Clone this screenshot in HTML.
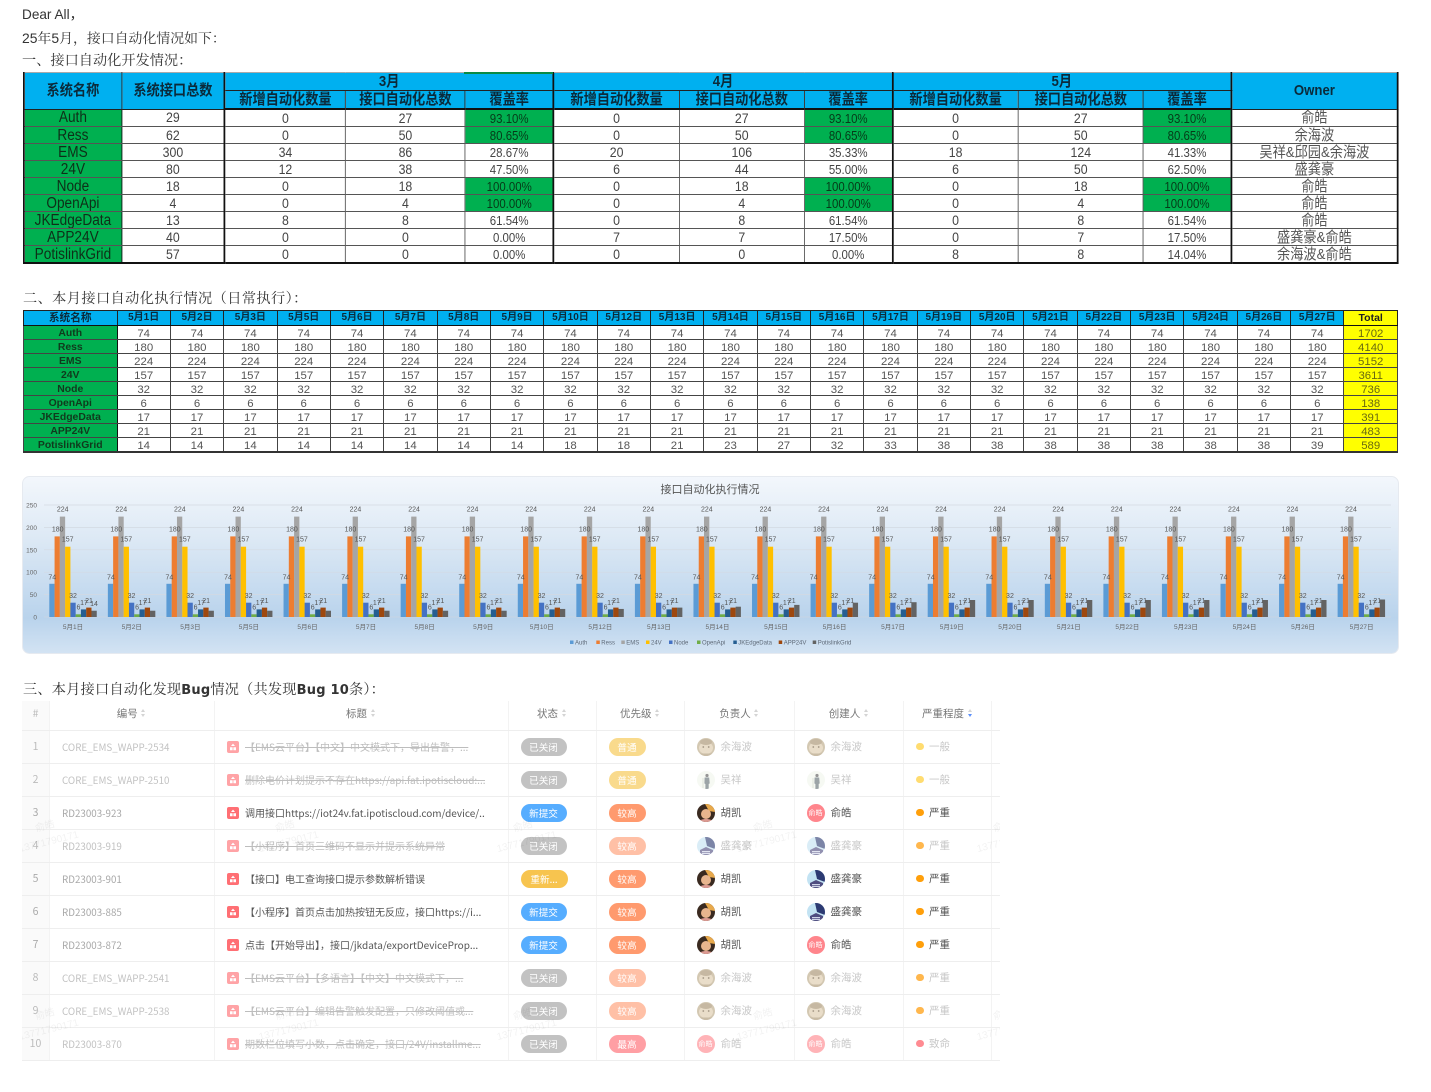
<!DOCTYPE html>
<html lang="zh"><head><meta charset="utf-8"><title>接口自动化</title>
<style>
html,body{margin:0;padding:0;background:#fff}
body{width:1431px;height:1092px;overflow:hidden;position:relative;font-family:"Liberation Sans","Noto Sans CJK SC",sans-serif;color:#333}
#w{position:absolute;left:0;top:0;width:1431px;height:1092px;filter:blur(.35px)}
.t{position:absolute;left:22px;font-family:"Liberation Serif","Noto Serif CJK SC",serif;font-size:14.2px;line-height:18px;white-space:nowrap;color:#333}
.t b{font-family:"DejaVu Sans",sans-serif;font-weight:700;font-size:13px}
.d{font-family:"Liberation Sans","Noto Sans CJK SC",sans-serif}
table{border-collapse:collapse;table-layout:fixed;position:absolute}
td,th{padding:0;text-align:center;overflow:hidden;white-space:nowrap}
#a{left:23px;top:72px;width:1562px;transform:scaleX(.8795);transform-origin:0 0;font-size:14px;color:#444}
#a td,#a th{height:16px;line-height:15px;border:1px solid #555}
#a thead th{height:17px;background:#00B0F0;color:#0b2a3a;font-size:15px;font-weight:700;border-color:#222;border-bottom-width:1px}
#a thead tr:last-child th{border-bottom:2px solid #111}
#a thead tr:first-child th{border-top:1px solid #aaa}
#a th.n{background:#00B050;color:#0e2f18;font-weight:400;font-size:15.5px;border-right:1px solid #111;border-top:1px solid #333}
#a .k{border-left:2px solid #111}
#a .g{background:#00B050;color:#063a18}
#a .p{font-size:13px}
#a .o{font-size:15px;color:#555;border-left:2px solid #111}
#a{border:2px solid #111;border-top:1px solid #aaa}
#b{left:23px;top:310px;width:1375px;font-size:11.4px;color:#555;border:1px solid #222;border-bottom:2px solid #333}
#b td,#b tbody th{height:10px;line-height:10px;padding-top:3px;border:1px solid #444}
#b thead th{height:14px;line-height:14px;background:#00B0F0;color:#0b2a3a;font-size:10px;font-weight:700;border:1px solid #222;border-bottom:1px solid #111}
#b thead th:first-child{font-size:10.7px}
#b tbody th{background:#00B050;color:#103a1d;font-size:10.4px;font-weight:700;border-right:1.5px solid #111}
#b .y{background:#FFFF00;color:#6a6a10;border-left:1.5px solid #111}
#b thead th.y{background:#FFFF00;color:#222;font-size:10.5px}
#c{position:absolute;left:0;top:0}
#e{left:22px;top:700.5px;width:978px;font-size:10.5px;line-height:14px;color:#555;font-family:"Noto Sans CJK SC",sans-serif}
#e th{height:27px;padding-bottom:2px;font-weight:400;color:#777;border-right:1px solid #f3f3f3;border-bottom:1px solid #eee}
#e td{height:32px;border-right:1px solid #f3f3f3;border-bottom:1px solid #eee;text-align:left}
#e td:last-child,#e th:last-child{border-right:0}
#e td:first-child,#e th:first-child{background:#fafafa;text-align:center;color:#aaa}
#e th:first-child{color:#bbb}
#e td.m{color:#a8a8a8;padding-left:12px;font-size:9.8px}
#e td.i{padding-left:12.5px;overflow:visible}
#e td.s{padding-left:12px}
#e td.u{padding-left:11.5px}
#e td.v{padding-left:12px}
#e tr.c td{color:#c8c8c8}
#e tr.c td:first-child{color:#bbb}
#e tr.c td.m{color:#c2c2c2}
.r{display:inline-block;width:6px;height:9px;position:relative;vertical-align:-1px;margin-left:3px}
.r:before,.r:after{content:"";position:absolute;left:.5px;border-left:2.5px solid transparent;border-right:2.5px solid transparent}
.r:before{top:0;border-bottom:3.5px solid #d4d4d4}
.r:after{top:5px;border-top:3.5px solid #d4d4d4}
.r.x:after{border-top-color:#5b8ff9}
.ic{display:inline-block;width:12px;height:12px;vertical-align:middle;margin-right:6px;color:#ff6f74}
tr.c .ic{color:#ffa3a6}
.tt{display:inline-block;width:240px;font-size:10px;vertical-align:middle;overflow:hidden;white-space:nowrap;color:#555}
tr.c .tt{color:#bdbdbd;text-decoration:line-through}
.pl{display:inline-block;height:18px;line-height:18px;border-radius:9px;text-align:center;color:#fff!important;font-size:9.6px;vertical-align:middle}
.st{width:46px}
.pr{width:37px}
.A{background:#c2c2c2}.B{background:#56adff}.C{background:#f7c44f;width:47px}
.D{background:#f9da8c}.E{background:#ff9a6e}.F{background:#ffc0a6}.G{background:#ff9fa4}
.av{display:inline-block;width:18px;height:18px;border-radius:50%;vertical-align:middle;margin-right:6px;overflow:hidden}
.av svg{display:block;width:18px;height:18px}
.nm{display:inline-block;vertical-align:middle}
tr.c .av{opacity:.62}
.yh{background:#ff858c;color:#fff!important;font-size:7px;line-height:18px;text-align:center;white-space:nowrap}
.dt{display:inline-block;width:7.5px;height:7.5px;border-radius:50%;margin-right:5.5px;vertical-align:middle}
#m{position:absolute;left:22px;top:700px;width:978px;height:361px;overflow:hidden;pointer-events:none}
.wm{position:absolute;color:rgba(0,0,0,.055);font-size:10px;transform:rotate(-14deg);white-space:nowrap;text-align:center;line-height:16px;width:80px}
.wm span{display:block}
</style></head><body><div id="w">
<div class="t d" style="top:6px;font-size:13.6px">Dear All，</div>
<div class="t" style="top:29px;font-size:13.9px"><span class="d">25</span>年<span class="d">5</span>月，接口自动化情况如下：</div>
<div class="t" style="top:52px">一、接口自动化开发情况：</div>

<table id="a"><colgroup><col style="width:111px"><col style="width:117.4px"><col style="width:137.5px"><col style="width:135.9px"><col style="width:100.5px"><col style="width:142.7px"><col style="width:142.5px"><col style="width:100px"><col style="width:143.2px"><col style="width:142px"><col style="width:100px"><col style="width:189.2px"></colgroup>
<thead><tr><th rowspan="2">系统名称</th><th rowspan="2">系统接口总数</th><th colspan="3" class="k">3月</th><th colspan="3" class="k">4月</th><th colspan="3" class="k">5月</th><th rowspan="2" class="k">Owner</th></tr>
<tr><th class="k">新增自动化数量</th><th>接口自动化总数</th><th>覆盖率</th><th class="k">新增自动化数量</th><th>接口自动化总数</th><th>覆盖率</th><th class="k">新增自动化数量</th><th>接口自动化总数</th><th>覆盖率</th></tr></thead>
<tbody>
<tr><th class="n">Auth</th><td>29</td><td class="k">0</td><td>27</td><td class="p g">93.10%</td><td class="k">0</td><td>27</td><td class="p g">93.10%</td><td class="k">0</td><td>27</td><td class="p g">93.10%</td><td class="o">俞皓</td></tr>
<tr><th class="n">Ress</th><td>62</td><td class="k">0</td><td>50</td><td class="p g">80.65%</td><td class="k">0</td><td>50</td><td class="p g">80.65%</td><td class="k">0</td><td>50</td><td class="p g">80.65%</td><td class="o">余海波</td></tr>
<tr><th class="n">EMS</th><td>300</td><td class="k">34</td><td>86</td><td class="p">28.67%</td><td class="k">20</td><td>106</td><td class="p">35.33%</td><td class="k">18</td><td>124</td><td class="p">41.33%</td><td class="o">吴祥&amp;邱园&amp;余海波</td></tr>
<tr><th class="n">24V</th><td>80</td><td class="k">12</td><td>38</td><td class="p">47.50%</td><td class="k">6</td><td>44</td><td class="p">55.00%</td><td class="k">6</td><td>50</td><td class="p">62.50%</td><td class="o">盛龚豪</td></tr>
<tr><th class="n">Node</th><td>18</td><td class="k">0</td><td>18</td><td class="p g">100.00%</td><td class="k">0</td><td>18</td><td class="p g">100.00%</td><td class="k">0</td><td>18</td><td class="p g">100.00%</td><td class="o">俞皓</td></tr>
<tr><th class="n">OpenApi</th><td>4</td><td class="k">0</td><td>4</td><td class="p g">100.00%</td><td class="k">0</td><td>4</td><td class="p g">100.00%</td><td class="k">0</td><td>4</td><td class="p g">100.00%</td><td class="o">俞皓</td></tr>
<tr><th class="n">JKEdgeData</th><td>13</td><td class="k">8</td><td>8</td><td class="p">61.54%</td><td class="k">0</td><td>8</td><td class="p">61.54%</td><td class="k">0</td><td>8</td><td class="p">61.54%</td><td class="o">俞皓</td></tr>
<tr><th class="n">APP24V</th><td>40</td><td class="k">0</td><td>0</td><td class="p">0.00%</td><td class="k">7</td><td>7</td><td class="p">17.50%</td><td class="k">0</td><td>7</td><td class="p">17.50%</td><td class="o">盛龚豪&amp;俞皓</td></tr>
<tr><th class="n">PotislinkGrid</th><td>57</td><td class="k">0</td><td>0</td><td class="p">0.00%</td><td class="k">0</td><td>0</td><td class="p">0.00%</td><td class="k">8</td><td>8</td><td class="p">14.04%</td><td class="o">余海波&amp;俞皓</td></tr>
</tbody></table>
<div style="position:absolute;left:464px;top:72px;width:89px;height:2px;background:#0a8a44"></div>

<div class="t" style="top:290px;left:23px;letter-spacing:.4px">二、本月接口自动化执行情况（日常执行）：</div>
<table id="b"><colgroup><col style="width:93.5px"></colgroup>
<thead><tr><th>系统名称</th><th>5月1日</th><th>5月2日</th><th>5月3日</th><th>5月5日</th><th>5月6日</th><th>5月7日</th><th>5月8日</th><th>5月9日</th><th>5月10日</th><th>5月12日</th><th>5月13日</th><th>5月14日</th><th>5月15日</th><th>5月16日</th><th>5月17日</th><th>5月19日</th><th>5月20日</th><th>5月21日</th><th>5月22日</th><th>5月23日</th><th>5月24日</th><th>5月26日</th><th>5月27日</th><th class="y">Total</th></tr></thead>
<tbody>
<tr><th>Auth</th><td>74</td><td>74</td><td>74</td><td>74</td><td>74</td><td>74</td><td>74</td><td>74</td><td>74</td><td>74</td><td>74</td><td>74</td><td>74</td><td>74</td><td>74</td><td>74</td><td>74</td><td>74</td><td>74</td><td>74</td><td>74</td><td>74</td><td>74</td><td class="y">1702</td></tr>
<tr><th>Ress</th><td>180</td><td>180</td><td>180</td><td>180</td><td>180</td><td>180</td><td>180</td><td>180</td><td>180</td><td>180</td><td>180</td><td>180</td><td>180</td><td>180</td><td>180</td><td>180</td><td>180</td><td>180</td><td>180</td><td>180</td><td>180</td><td>180</td><td>180</td><td class="y">4140</td></tr>
<tr><th>EMS</th><td>224</td><td>224</td><td>224</td><td>224</td><td>224</td><td>224</td><td>224</td><td>224</td><td>224</td><td>224</td><td>224</td><td>224</td><td>224</td><td>224</td><td>224</td><td>224</td><td>224</td><td>224</td><td>224</td><td>224</td><td>224</td><td>224</td><td>224</td><td class="y">5152</td></tr>
<tr><th>24V</th><td>157</td><td>157</td><td>157</td><td>157</td><td>157</td><td>157</td><td>157</td><td>157</td><td>157</td><td>157</td><td>157</td><td>157</td><td>157</td><td>157</td><td>157</td><td>157</td><td>157</td><td>157</td><td>157</td><td>157</td><td>157</td><td>157</td><td>157</td><td class="y">3611</td></tr>
<tr><th>Node</th><td>32</td><td>32</td><td>32</td><td>32</td><td>32</td><td>32</td><td>32</td><td>32</td><td>32</td><td>32</td><td>32</td><td>32</td><td>32</td><td>32</td><td>32</td><td>32</td><td>32</td><td>32</td><td>32</td><td>32</td><td>32</td><td>32</td><td>32</td><td class="y">736</td></tr>
<tr><th>OpenApi</th><td>6</td><td>6</td><td>6</td><td>6</td><td>6</td><td>6</td><td>6</td><td>6</td><td>6</td><td>6</td><td>6</td><td>6</td><td>6</td><td>6</td><td>6</td><td>6</td><td>6</td><td>6</td><td>6</td><td>6</td><td>6</td><td>6</td><td>6</td><td class="y">138</td></tr>
<tr><th>JKEdgeData</th><td>17</td><td>17</td><td>17</td><td>17</td><td>17</td><td>17</td><td>17</td><td>17</td><td>17</td><td>17</td><td>17</td><td>17</td><td>17</td><td>17</td><td>17</td><td>17</td><td>17</td><td>17</td><td>17</td><td>17</td><td>17</td><td>17</td><td>17</td><td class="y">391</td></tr>
<tr><th>APP24V</th><td>21</td><td>21</td><td>21</td><td>21</td><td>21</td><td>21</td><td>21</td><td>21</td><td>21</td><td>21</td><td>21</td><td>21</td><td>21</td><td>21</td><td>21</td><td>21</td><td>21</td><td>21</td><td>21</td><td>21</td><td>21</td><td>21</td><td>21</td><td class="y">483</td></tr>
<tr><th>PotislinkGrid</th><td>14</td><td>14</td><td>14</td><td>14</td><td>14</td><td>14</td><td>14</td><td>14</td><td>18</td><td>18</td><td>21</td><td>23</td><td>27</td><td>32</td><td>33</td><td>38</td><td>38</td><td>38</td><td>38</td><td>38</td><td>38</td><td>38</td><td>39</td><td class="y">589</td></tr>
</tbody></table>

<svg id="c" width="1431" height="670" viewBox="0 0 1431 670" font-family="Liberation Sans,Noto Sans CJK SC,sans-serif">
<defs>
<linearGradient id="bg" x1="0" y1="0" x2="0" y2="1"><stop offset="0" stop-color="#f3f7fc"/><stop offset=".35" stop-color="#dde9f5"/><stop offset=".8" stop-color="#b9d3ec"/><stop offset="1" stop-color="#d3e3f3"/></linearGradient>
<g id="g">
<rect x="0" y="583.8" width="5.3" height="33.2" fill="#5B9BD5"/>
<rect x="5.27" y="536.4" width="5.3" height="80.6" fill="#ED7D31"/>
<rect x="10.54" y="516.6" width="5.3" height="100.4" fill="#A5A5A5"/>
<rect x="15.81" y="546.7" width="5.3" height="70.3" fill="#FFC000"/>
<rect x="21.08" y="602.7" width="5.3" height="14.3" fill="#4472C4"/>
<rect x="26.35" y="614.3" width="5.3" height="2.7" fill="#70AD47"/>
<rect x="31.62" y="609.4" width="5.3" height="7.6" fill="#255E91"/>
<rect x="36.89" y="607.6" width="5.3" height="9.4" fill="#9E480E"/>
<g font-size="7" fill="#555" text-anchor="middle">
<text x="3" y="579.5">74</text><text x="8.4" y="531.5">180</text><text x="13.4" y="511.5">224</text><text x="18.4" y="541.5">157</text><text x="23.7" y="598">32</text><text x="29.2" y="609.3">6</text><text x="34.7" y="605">17</text><text x="39.7" y="603">21</text>
</g>
</g>
</defs>
<rect x="22.5" y="476.5" width="1376" height="177" rx="7" fill="url(#bg)" stroke="#e6eaf0"/>
<text x="710" y="493" font-size="11" fill="#555" text-anchor="middle">接口自动化执行情况</text>
<g stroke="#d3d9e2" stroke-width=".7"><path d="M44 505H1391M44 527.4H1391M44 549.8H1391M44 572.2H1391M44 594.6H1391"/></g>
<path d="M44 617H1391" stroke="#cdd6e0" stroke-width=".8"/>
<g font-size="6.5" fill="#666" text-anchor="end"><text x="37" y="507.5">250</text><text x="37" y="529.9">200</text><text x="37" y="552.3">150</text><text x="37" y="574.7">100</text><text x="37" y="597.1">50</text><text x="37" y="619.5">0</text></g>
<g transform="translate(49.3)"><use href="#g"/><rect x="42.16" y="610.73" width="5.3" height="6.27" fill="#636363"/><text x="44.7" y="606" font-size="7" fill="#555" text-anchor="middle">14</text></g>
<g fill="#636363">
<use href="#g" x="107.86"/><rect x="150.02" y="610.73" width="5.3" height="6.27"/>
<use href="#g" x="166.42"/><rect x="208.58" y="610.73" width="5.3" height="6.27"/>
<use href="#g" x="224.98"/><rect x="267.14" y="610.73" width="5.3" height="6.27"/>
<use href="#g" x="283.54"/><rect x="325.7" y="610.73" width="5.3" height="6.27"/>
<use href="#g" x="342.1"/><rect x="384.26" y="610.73" width="5.3" height="6.27"/>
<use href="#g" x="400.66"/><rect x="442.82" y="610.73" width="5.3" height="6.27"/>
<use href="#g" x="459.22"/><rect x="501.38" y="610.73" width="5.3" height="6.27"/>
<use href="#g" x="517.78"/><rect x="559.94" y="608.94" width="5.3" height="8.06"/>
<use href="#g" x="576.34"/><rect x="618.5" y="608.94" width="5.3" height="8.06"/>
<use href="#g" x="634.9"/><rect x="677.06" y="607.6" width="5.3" height="9.4"/>
<use href="#g" x="693.46"/><rect x="735.62" y="606.7" width="5.3" height="10.3"/>
<use href="#g" x="752.02"/><rect x="794.18" y="604.9" width="5.3" height="12.1"/>
<use href="#g" x="810.58"/><rect x="852.74" y="602.7" width="5.3" height="14.3"/>
<use href="#g" x="869.14"/><rect x="911.3" y="602.2" width="5.3" height="14.8"/>
<use href="#g" x="927.7"/><rect x="969.86" y="600" width="5.3" height="17"/>
<use href="#g" x="986.26"/><rect x="1028.42" y="600" width="5.3" height="17"/>
<use href="#g" x="1044.82"/><rect x="1086.98" y="600" width="5.3" height="17"/>
<use href="#g" x="1103.38"/><rect x="1145.54" y="600" width="5.3" height="17"/>
<use href="#g" x="1161.94"/><rect x="1204.1" y="600" width="5.3" height="17"/>
<use href="#g" x="1220.5"/><rect x="1262.66" y="600" width="5.3" height="17"/>
<use href="#g" x="1279.06"/><rect x="1321.22" y="600" width="5.3" height="17"/>
<use href="#g" x="1337.62"/><rect x="1379.78" y="599.5" width="5.3" height="17.5"/>
</g>
<g font-size="6.5" fill="#666" text-anchor="middle">
<text x="73" y="629">5月1日</text><text x="131.8" y="629">5月2日</text><text x="190.4" y="629">5月3日</text><text x="248.9" y="629">5月5日</text><text x="307.5" y="629">5月6日</text><text x="366" y="629">5月7日</text><text x="424.6" y="629">5月8日</text><text x="483.2" y="629">5月9日</text><text x="541.7" y="629">5月10日</text><text x="600.3" y="629">5月12日</text><text x="658.9" y="629">5月13日</text><text x="717.4" y="629">5月14日</text><text x="776" y="629">5月15日</text><text x="834.5" y="629">5月16日</text><text x="893.1" y="629">5月17日</text><text x="951.7" y="629">5月19日</text><text x="1010.2" y="629">5月20日</text><text x="1068.8" y="629">5月21日</text><text x="1127.3" y="629">5月22日</text><text x="1185.9" y="629">5月23日</text><text x="1244.5" y="629">5月24日</text><text x="1303" y="629">5月26日</text><text x="1361.6" y="629">5月27日</text>
</g>
<g font-size="6" fill="#5f6a78">
<rect x="570" y="640.5" width="3.5" height="3.5" fill="#5B9BD5"/><text x="575" y="644.4">Auth</text>
<rect x="596.3" y="640.5" width="3.5" height="3.5" fill="#ED7D31"/><text x="601.3" y="644.4">Ress</text>
<rect x="621.3" y="640.5" width="3.5" height="3.5" fill="#A5A5A5"/><text x="626.3" y="644.4">EMS</text>
<rect x="646" y="640.5" width="3.5" height="3.5" fill="#FFC000"/><text x="651" y="644.4">24V</text>
<rect x="669" y="640.5" width="3.5" height="3.5" fill="#4472C4"/><text x="674" y="644.4">Node</text>
<rect x="697" y="640.5" width="3.5" height="3.5" fill="#70AD47"/><text x="702" y="644.4">OpenApi</text>
<rect x="733.3" y="640.5" width="3.5" height="3.5" fill="#255E91"/><text x="738.3" y="644.4">JKEdgeData</text>
<rect x="778.7" y="640.5" width="3.5" height="3.5" fill="#9E480E"/><text x="783.7" y="644.4">APP24V</text>
<rect x="812.7" y="640.5" width="3.5" height="3.5" fill="#636363"/><text x="817.7" y="644.4">PotislinkGrid</text>
</g>
</svg>

<div class="t" style="top:681px;left:23px;letter-spacing:.2px">三、本月接口自动化发现<b>Bug</b>情况（共发现<b>Bug 10</b>条）：</div>

<svg width="0" height="0" style="position:absolute"><defs>
<symbol id="bi" viewBox="0 0 12 12"><rect width="12" height="12" rx="2" fill="currentColor"/><path d="M6 2.6 8 5H4zM3 6.2h2.6v3H3zM6.4 6.2H9v3H6.4z" fill="#fff"/></symbol>
<symbol id="cat" viewBox="0 0 18 18"><rect width="18" height="18" fill="#b9a684"/><ellipse cx="9" cy="10" rx="7" ry="6" fill="#dcc9a8"/><ellipse cx="9" cy="4" rx="6" ry="3" fill="#a38d6a"/><circle cx="6.3" cy="9" r=".9" fill="#6a5438"/><circle cx="11.7" cy="9" r=".9" fill="#6a5438"/><path d="M0 15.5h18V18H0z" fill="#a8936f"/></symbol>
<symbol id="wu" viewBox="0 0 18 18"><rect width="18" height="18" fill="#f0f5ec"/><circle cx="10" cy="4.5" r="1.6" fill="#555"/><path d="M7.6 6.5h4.6l.5 6-1 .4V18H8.4v-5l-1-.5z" fill="#5f6c72"/><path d="M5 7h2v10H5z" fill="#dfe5d8"/></symbol>
<symbol id="hu" viewBox="0 0 18 18"><rect width="18" height="18" fill="#3a2a20"/><path d="M8 0h10v8l-6-1z" fill="#e8a94c"/><circle cx="9" cy="10" r="5" fill="#e8b58e"/><path d="M2 18c1-4 13-4 14 0z" fill="#dc9a92"/></symbol>
<symbol id="sh" viewBox="0 0 18 18"><rect width="18" height="18" fill="#c3e3f3"/><path d="M8 0h10v12L10 9z" fill="#2c3a72"/><path d="M3 18v-5l6-3 7 3v5z" fill="#4f4d80"/><path d="M5 14h8v1.2H5zM5 16h8v1H5z" fill="#cfd4e8"/></symbol>
</defs></svg>

<table id="e"><colgroup><col style="width:27.5px"><col style="width:164.5px"><col style="width:294px"><col style="width:88px"><col style="width:88.5px"><col style="width:110px"><col style="width:109px"><col style="width:88px"><col style="width:8.5px"></colgroup>
<thead><tr><th>#</th><th>编号<i class="r"></i></th><th>标题<i class="r"></i></th><th>状态<i class="r"></i></th><th>优先级<i class="r"></i></th><th>负责人<i class="r"></i></th><th>创建人<i class="r"></i></th><th>严重程度<i class="r x"></i></th><th></th></tr></thead>
<tbody>
<tr class="c"><td>1</td><td class="m">CORE_EMS_WAPP-2534</td><td class="i"><svg class="ic"><use href="#bi"/></svg><span class="tt">【EMS云平台】【中文】中文模式下，导出告警，...</span></td><td class="s"><span class="pl st A">已关闭</span></td><td class="s"><span class="pl pr D">普通</span></td><td class="u"><span class="av"><svg><use href="#cat"/></svg></span><span class="nm">余海波</span></td><td class="u"><span class="av"><svg><use href="#cat"/></svg></span><span class="nm">余海波</span></td><td class="v"><i class="dt" style="background:#ffdc70"></i><span class="nm">一般</span></td><td></td></tr>
<tr class="c"><td>2</td><td class="m">CORE_EMS_WAPP-2510</td><td class="i"><svg class="ic"><use href="#bi"/></svg><span class="tt">删除电价计划提示不存在https://api.fat.ipotiscloud:...</span></td><td class="s"><span class="pl st A">已关闭</span></td><td class="s"><span class="pl pr D">普通</span></td><td class="u"><span class="av"><svg><use href="#wu"/></svg></span><span class="nm">吴祥</span></td><td class="u"><span class="av"><svg><use href="#wu"/></svg></span><span class="nm">吴祥</span></td><td class="v"><i class="dt" style="background:#ffdc70"></i><span class="nm">一般</span></td><td></td></tr>
<tr><td>3</td><td class="m">RD23003-923</td><td class="i"><svg class="ic"><use href="#bi"/></svg><span class="tt">调用接口https://iot24v.fat.ipotiscloud.com/device/...</span></td><td class="s"><span class="pl st B">新提交</span></td><td class="s"><span class="pl pr E">较高</span></td><td class="u"><span class="av"><svg><use href="#hu"/></svg></span><span class="nm">胡凯</span></td><td class="u"><span class="av yh">俞皓</span><span class="nm">俞皓</span></td><td class="v"><i class="dt" style="background:#ff9f0a"></i><span class="nm">严重</span></td><td></td></tr>
<tr class="c"><td>4</td><td class="m">RD23003-919</td><td class="i"><svg class="ic"><use href="#bi"/></svg><span class="tt">【小程序】首页三维码不显示并提示系统异常</span></td><td class="s"><span class="pl st A">已关闭</span></td><td class="s"><span class="pl pr F">较高</span></td><td class="u"><span class="av"><svg><use href="#sh"/></svg></span><span class="nm">盛龚豪</span></td><td class="u"><span class="av"><svg><use href="#sh"/></svg></span><span class="nm">盛龚豪</span></td><td class="v"><i class="dt" style="background:#ffb74d"></i><span class="nm">严重</span></td><td></td></tr>
<tr><td>5</td><td class="m">RD23003-901</td><td class="i"><svg class="ic"><use href="#bi"/></svg><span class="tt">【接口】电工查询接口提示参数解析错误</span></td><td class="s"><span class="pl st C">重新...</span></td><td class="s"><span class="pl pr E">较高</span></td><td class="u"><span class="av"><svg><use href="#hu"/></svg></span><span class="nm">胡凯</span></td><td class="u"><span class="av"><svg><use href="#sh"/></svg></span><span class="nm">盛龚豪</span></td><td class="v"><i class="dt" style="background:#ff9f0a"></i><span class="nm">严重</span></td><td></td></tr>
<tr><td>6</td><td class="m">RD23003-885</td><td class="i"><svg class="ic"><use href="#bi"/></svg><span class="tt">【小程序】首页点击加热按钮无反应，接口https://i...</span></td><td class="s"><span class="pl st B">新提交</span></td><td class="s"><span class="pl pr E">较高</span></td><td class="u"><span class="av"><svg><use href="#hu"/></svg></span><span class="nm">胡凯</span></td><td class="u"><span class="av"><svg><use href="#sh"/></svg></span><span class="nm">盛龚豪</span></td><td class="v"><i class="dt" style="background:#ff9f0a"></i><span class="nm">严重</span></td><td></td></tr>
<tr><td>7</td><td class="m">RD23003-872</td><td class="i"><svg class="ic"><use href="#bi"/></svg><span class="tt">点击【开始导出】，接口/jkdata/exportDeviceProp...</span></td><td class="s"><span class="pl st B">新提交</span></td><td class="s"><span class="pl pr E">较高</span></td><td class="u"><span class="av"><svg><use href="#hu"/></svg></span><span class="nm">胡凯</span></td><td class="u"><span class="av yh">俞皓</span><span class="nm">俞皓</span></td><td class="v"><i class="dt" style="background:#ff9f0a"></i><span class="nm">严重</span></td><td></td></tr>
<tr class="c"><td>8</td><td class="m">CORE_EMS_WAPP-2541</td><td class="i"><svg class="ic"><use href="#bi"/></svg><span class="tt">【EMS云平台】【多语言】【中文】中文模式下，...</span></td><td class="s"><span class="pl st A">已关闭</span></td><td class="s"><span class="pl pr F">较高</span></td><td class="u"><span class="av"><svg><use href="#cat"/></svg></span><span class="nm">余海波</span></td><td class="u"><span class="av"><svg><use href="#cat"/></svg></span><span class="nm">余海波</span></td><td class="v"><i class="dt" style="background:#ffb74d"></i><span class="nm">严重</span></td><td></td></tr>
<tr class="c"><td>9</td><td class="m">CORE_EMS_WAPP-2538</td><td class="i"><svg class="ic"><use href="#bi"/></svg><span class="tt">【EMS云平台】编辑告警触发配置，只修改阈值或...</span></td><td class="s"><span class="pl st A">已关闭</span></td><td class="s"><span class="pl pr F">较高</span></td><td class="u"><span class="av"><svg><use href="#cat"/></svg></span><span class="nm">余海波</span></td><td class="u"><span class="av"><svg><use href="#cat"/></svg></span><span class="nm">余海波</span></td><td class="v"><i class="dt" style="background:#ffb74d"></i><span class="nm">严重</span></td><td></td></tr>
<tr class="c"><td>10</td><td class="m">RD23003-870</td><td class="i"><svg class="ic"><use href="#bi"/></svg><span class="tt">期数栏位填写小数，点击确定，接口/24V/installme...</span></td><td class="s"><span class="pl st A">已关闭</span></td><td class="s"><span class="pl pr G">最高</span></td><td class="u"><span class="av yh">俞皓</span><span class="nm">俞皓</span></td><td class="u"><span class="av yh">俞皓</span><span class="nm">俞皓</span></td><td class="v"><i class="dt" style="background:#ff8b92"></i><span class="nm">致命</span></td><td></td></tr>
</tbody></table>

<div id="m">
<div class="wm" style="left:-15px;top:119px">俞皓<span>13771790171</span></div>
<div class="wm" style="left:225px;top:119px">俞皓<span>13771790171</span></div>
<div class="wm" style="left:463px;top:119px">俞皓<span>13771790171</span></div>
<div class="wm" style="left:703px;top:119px">俞皓<span>13771790171</span></div>
<div class="wm" style="left:943px;top:119px">俞皓<span>13771790171</span></div>
<div class="wm" style="left:-15px;top:307px">俞皓<span>13771790171</span></div>
<div class="wm" style="left:225px;top:307px">俞皓<span>13771790171</span></div>
<div class="wm" style="left:463px;top:307px">俞皓<span>13771790171</span></div>
<div class="wm" style="left:703px;top:307px">俞皓<span>13771790171</span></div>
<div class="wm" style="left:943px;top:307px">俞皓<span>13771790171</span></div>
</div>
</div></body></html>
